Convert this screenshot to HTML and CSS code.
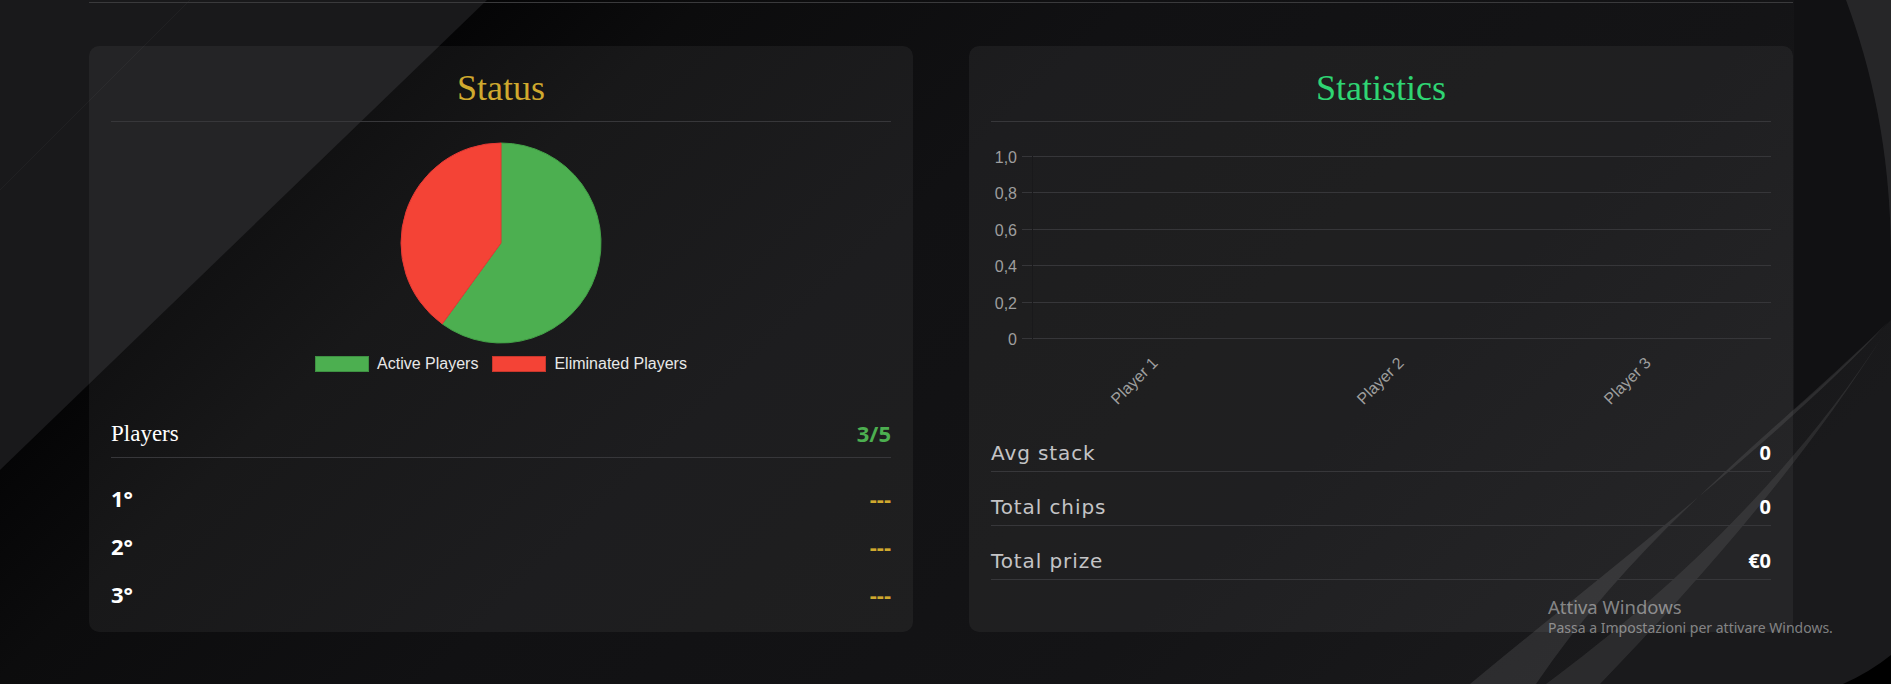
FILE: index.html
```html
<!DOCTYPE html>
<html lang="it">
<head>
<meta charset="utf-8">
<title>Torneo</title>
<link rel="stylesheet" href="styles.css">
</head>
<body>
<div class="bg" aria-hidden="true">
  <svg width="1891" height="684" viewBox="0 0 1891 684">
    <defs>
      <linearGradient id="shade" gradientUnits="userSpaceOnUse" x1="243.5" y1="235" x2="1111" y2="1135">
        <stop offset="0" stop-color="#050506"/>
        <stop offset="0.12" stop-color="#0c0c0d"/>
        <stop offset="0.36" stop-color="#111113"/>
        <stop offset="0.72" stop-color="#141416"/>
        <stop offset="1" stop-color="#1a1a1c"/>
      </linearGradient>
    </defs>
    <rect width="1891" height="684" fill="url(#shade)"/>
    <polygon points="0,0 487,0 0,470" fill="#19191b"/>
    <line x1="0" y1="190" x2="190" y2="0" stroke="#202022" stroke-width="1"/>
    <path d="M1794 0 L1846 0 C1872 70 1890 150 1891 250 L1891 320 C1860 350 1830 380 1794 410 Z" fill="#111113"/>
    <path d="M1846 0 C1872 70 1890 150 1891 250 L1891 0 Z" fill="#262628"/>
    <path d="M1470 684 C1620 560 1790 430 1888 322 C1790 420 1640 530 1536 684 Z" fill="rgba(255,255,255,0.09)"/>
    <path d="M1546 684 C1660 600 1790 480 1884 334 C1805 460 1700 580 1600 684 Z" fill="rgba(255,255,255,0.08)"/>
    <path d="M1843 684 Q1870 672 1891 655 L1891 684 Z" fill="#000"/>
  </svg>
</div>

<main class="page">
  <div class="topline"></div>
  <section class="cards">
    <article class="card">
      <h2 class="card-title gold">Status</h2>
      <div class="pie-wrap">
        <svg class="pie" width="202" height="202" viewBox="0 0 202 202">
          <path d="M101 101 L101 1 A100 100 0 1 1 42.22 181.9 Z" fill="#4caf50" stroke="#43a047" stroke-width="1"/>
          <path d="M101 101 L42.22 181.9 A100 100 0 0 1 101 1 Z" fill="#f44336" stroke="#e53935" stroke-width="1"/>
        </svg>
        <div class="legend">
          <span class="legend-item"><span class="swatch active"></span>Active Players</span>
          <span class="legend-item"><span class="swatch out"></span>Eliminated Players</span>
        </div>
      </div>
      <div class="players-head">
        <span class="players-label">Players</span>
        <span class="players-count">3/5</span>
      </div>
      <ul class="podium">
        <li><span class="place">1°</span><span class="dash">---</span></li>
        <li><span class="place">2°</span><span class="dash">---</span></li>
        <li><span class="place">3°</span><span class="dash">---</span></li>
      </ul>
    </article>

    <article class="card">
      <h2 class="card-title green">Statistics</h2>
      <svg class="chart" width="780" height="296" viewBox="0 0 780 296">
        <g class="grid">
          <line x1="31" y1="34.5" x2="780" y2="34.5"/>
          <line x1="31" y1="70.5" x2="780" y2="70.5"/>
          <line x1="31" y1="107.5" x2="780" y2="107.5"/>
          <line x1="31" y1="143.5" x2="780" y2="143.5"/>
          <line x1="31" y1="180.5" x2="780" y2="180.5"/>
          <line x1="31" y1="216.5" x2="780" y2="216.5"/>
        </g>
        <line class="axis" x1="41.5" y1="34" x2="41.5" y2="217"/>
        <g class="ylab">
          <text x="26" y="40.5">1,0</text>
          <text x="26" y="76.5">0,8</text>
          <text x="26" y="113.5">0,6</text>
          <text x="26" y="149.5">0,4</text>
          <text x="26" y="186.5">0,2</text>
          <text x="26" y="222.5">0</text>
        </g>
        <g class="xlab">
          <text x="164" y="238" transform="rotate(-45 164 238)">Player 1</text>
          <text x="410" y="238" transform="rotate(-45 410 238)">Player 2</text>
          <text x="657" y="238" transform="rotate(-45 657 238)">Player 3</text>
        </g>
      </svg>
      <dl class="stats">
        <div class="stat"><dt>Avg stack</dt><dd>0</dd></div>
        <div class="stat"><dt>Total chips</dt><dd>0</dd></div>
        <div class="stat"><dt>Total prize</dt><dd>€0</dd></div>
      </dl>
    </article>
  </section>
</main>

<div class="watermark">
  <div class="wm-title">Attiva Windows</div>
  <div class="wm-sub">Passa a Impostazioni per attivare Windows.</div>
</div>
</body>
</html>
```

FILE: styles.css
```css
* { box-sizing: border-box; }

html, body {
  margin: 0;
  padding: 0;
}

body {
  width: 1891px;
  height: 684px;
  overflow: hidden;
  position: relative;
  background: #141416;
  color: #fff;
  font-family: "Liberation Sans", Arial, sans-serif;
}

.bg {
  position: absolute;
  inset: 0;
  z-index: 0;
}

.bg svg { display: block; }

.page {
  position: relative;
  z-index: 1;
  width: 1704px;
  margin-left: 89px;
}

.topline {
  height: 3px;
  border-bottom: 1px solid #3a3a3c;
}

.cards {
  display: grid;
  grid-template-columns: 1fr 1fr;
  gap: 56px;
  margin-top: 43px;
}

.card {
  height: 586px;
  padding: 0 22px;
  border-radius: 10px;
  background: rgba(255, 255, 255, 0.05);
}

.card-title {
  margin: 0;
  padding: 21px 0 11px;
  font: 400 36px/43px "Liberation Serif", "Times New Roman", serif;
  text-align: center;
  border-bottom: 1px solid #37373a;
}

.gold { color: #cfa92e; }
.green { color: #2fd573; }

/* pie */
.pie-wrap {
  display: flex;
  flex-direction: column;
  align-items: center;
  padding-top: 20px;
}

.pie { display: block; }

.legend {
  display: flex;
  gap: 14px;
  margin-top: 11px;
  font: 400 16px/18px "Liberation Sans", Arial, sans-serif;
  color: #e8e8e8;
}

.legend-item {
  display: flex;
  align-items: center;
  gap: 8px;
}

.swatch {
  width: 54px;
  height: 16px;
  border: 1px solid;
}

.swatch.active { background: #4caf50; border-color: #3e9142; }
.swatch.out { background: #f44336; border-color: #c8372c; }

/* players */
.players-head {
  display: flex;
  justify-content: space-between;
  align-items: center;
  height: 49px;
  margin-top: 36px;
  border-bottom: 1px solid #37373a;
}

.players-label {
  font: 400 23px/27px "Liberation Serif", "Times New Roman", serif;
  color: #fff;
}

.players-count {
  font: 700 22px/30px "Open Sans", sans-serif;
  color: #4caf50;
}

.podium {
  list-style: none;
  margin: 0;
  padding: 16px 0 0;
}

.podium li {
  display: flex;
  justify-content: space-between;
  align-items: baseline;
  height: 48px;
}

.place {
  font: 700 22px/48px "Open Sans", sans-serif;
  color: #fff;
}

.dash {
  font: 700 22px/48px "Open Sans", sans-serif;
  color: #cfa92e;
}

/* chart */
.chart { display: block; }

.grid line {
  stroke: #363639;
  stroke-width: 1;
}

.axis {
  stroke: #19191b;
  stroke-width: 1;
}

.ylab text {
  font: 400 16px "Liberation Sans", Arial, sans-serif;
  fill: #9e9e9e;
  text-anchor: end;
}

.xlab text {
  font: 400 16px "Liberation Sans", Arial, sans-serif;
  fill: #9e9e9e;
  text-anchor: end;
  dominant-baseline: central;
}

/* stats */
.stats { margin: 0; }

.stat {
  display: flex;
  justify-content: space-between;
  align-items: baseline;
  padding: 23px 0 6px;
  border-bottom: 1px solid #37373a;
}

.stat dt {
  font: 400 20px/24px "DejaVu Sans", sans-serif;
  letter-spacing: 0.9px;
  color: #c4c4c6;
}

.stat dd {
  margin: 0;
  font: 700 20px/24px "Open Sans", sans-serif;
  color: #fff;
}

/* windows watermark */
.watermark {
  position: absolute;
  left: 1548px;
  top: 595px;
  z-index: 2;
  font-family: "Noto Sans", "Open Sans", sans-serif;
  color: rgba(255, 255, 255, 0.45);
}

.wm-title {
  font-size: 18.5px;
  line-height: 24px;
}

.wm-sub {
  font-size: 14px;
  line-height: 18px;
}
```
